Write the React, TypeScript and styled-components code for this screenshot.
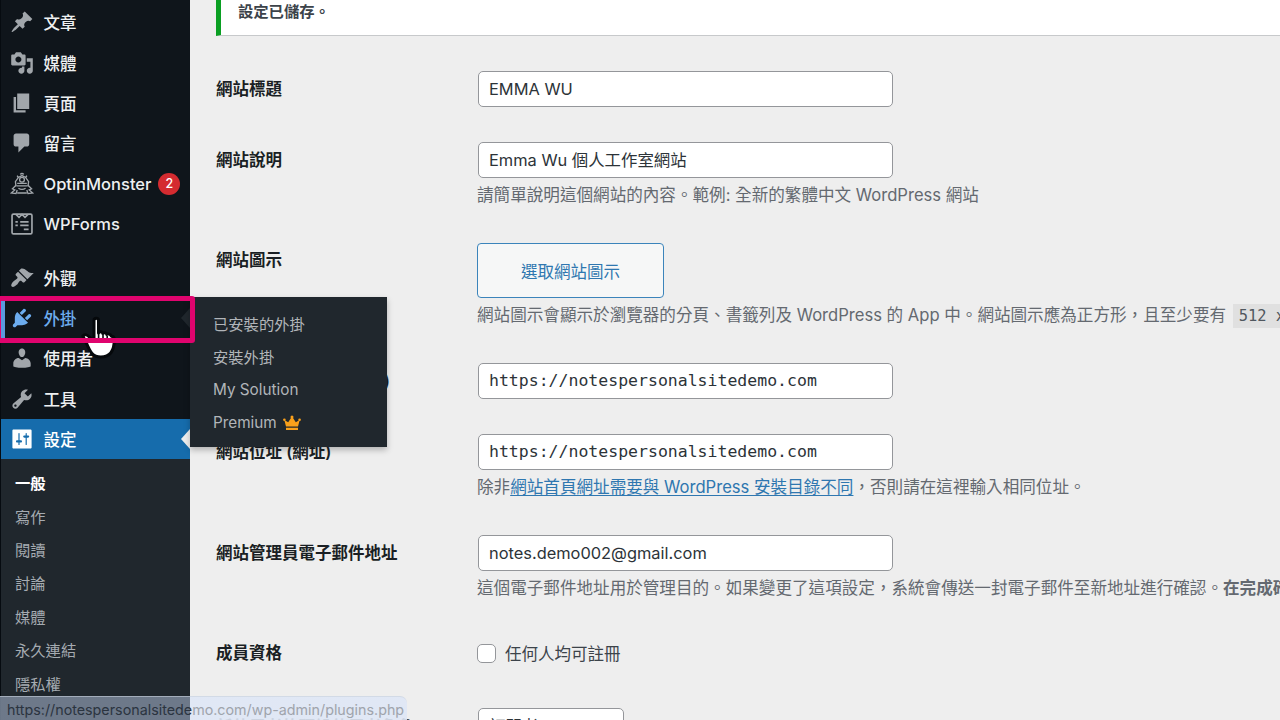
import React from "react";
import styled, { createGlobalStyle, css } from "styled-components";

const sans = `Inter, "Noto Sans CJK TC", sans-serif`;
const mono = `"DejaVu Sans Mono", "Noto Sans CJK TC", monospace`;

const GlobalStyle = createGlobalStyle`
  * { box-sizing: border-box; }
  body { margin: 0; background: #eeeeee; font-family: ${sans}; overflow: hidden; }
`;

const Screen = styled.div`
  position: relative;
  display: flex;
  width: 1280px;
  height: 720px;
  overflow: hidden;
  background: #eeeeee;
`;

const Sidebar = styled.nav`
  flex: none;
  width: 190px;
  height: 720px;
  background: #0f151b;
  border-left: 1px solid #060b10;
  padding-top: 2px;
`;

const MenuItem = styled.div<{ $state?: "current" | "hover" }>`
  position: relative;
  display: flex;
  align-items: center;
  height: 40.4px;
  padding-left: 9px;
  font-size: 16.5px;
  font-weight: 500;
  color: #eef0f1;
  white-space: nowrap;
  svg { color: #a1a6ab; }
  ${(p) =>
    p.$state === "current" &&
    css`
      background: #166cac;
      color: #fff;
      svg { color: #fff; }
    `}
  ${(p) =>
    p.$state === "hover" &&
    css`
      color: #6cacee;
      box-shadow: inset 4px 0 0 #5a9ade;
      svg { color: #6cacee; }
    `}
`;

const MenuIcon = styled.svg`
  flex: none;
  width: 24px;
  height: 24px;
  margin-right: 9.5px;
`;

const Notch = styled.span<{ $color: string }>`
  position: absolute;
  right: 0;
  top: 10px;
  border: 10px solid transparent;
  border-left: 0;
  border-right: 9px solid ${(p) => p.$color};
`;

const Count = styled.span`
  display: flex;
  align-items: center;
  justify-content: center;
  width: 22px;
  height: 22px;
  margin-left: 7px;
  border-radius: 50%;
  background: #d42b30;
  color: #fff;
  font-size: 12.5px;
`;

const Separator = styled.div`
  height: 13px;
`;

const Submenu = styled.div`
  height: 270px;
  padding: 8px 0 0 14px;
  background: #20272d;
`;

const SubmenuItem = styled.div<{ $active?: boolean }>`
  height: 33.4px;
  line-height: 33.4px;
  font-size: 15.3px;
  font-weight: ${(p) => (p.$active ? 700 : 400)};
  color: ${(p) => (p.$active ? "#fff" : "#a5abb1")};
`;

const Main = styled.main`
  flex: none;
  width: 1290px;
  padding-left: 26px;
`;

const Notice = styled.div`
  height: 36px;
  border-left: 5px solid #0a9f22;
  border-bottom: 1px solid #c7c9cb;
  background: #fff;
  padding: 0 0 0 17px;
  font-size: 15.3px;
  font-weight: 600;
  line-height: 24px;
  color: #3c434a;
`;

const Row = styled.section<{ $h: number }>`
  display: grid;
  grid-template-columns: 261px 1000px;
  height: ${(p) => p.$h}px;
`;

const Label = styled.div<{ $top?: number }>`
  padding-top: ${(p) => p.$top ?? 6}px;
  font-size: 16.5px;
  font-weight: 600;
  line-height: 24px;
  color: #1a1f24;
  white-space: nowrap;
`;

const Field = styled.div`
  display: flex;
  flex-direction: column;
  align-items: flex-start;
`;

const TextBox = styled.div<{ $mono?: boolean; $w?: number }>`
  width: ${(p) => p.$w ?? 415}px;
  height: 36px;
  margin-left: 1px;
  padding-left: 10px;
  border: 1.5px solid #94969a;
  border-radius: 5px;
  background: #fff;
  font-family: ${(p) => (p.$mono ? mono : sans)};
  font-size: ${(p) => (p.$mono ? 16.5 : 16.4)}px;
  line-height: 34px;
  color: #2c3338;
  white-space: pre;
`;

const Hint = styled.div`
  height: 24px;
  margin-top: 5px;
  font-size: 16.58px;
  line-height: 24px;
  color: #646970;
  white-space: nowrap;
`;

const Link = styled.a`
  color: #2f77b0;
  text-decoration: underline;
  text-underline-offset: 2px;
`;

const Code = styled.code`
  margin-left: 2px;
  padding: 3px 6px;
  background: #e0e0e0;
  font-family: ${mono};
  font-size: 15.4px;
  color: #50575e;
`;

const PickButton = styled.div`
  display: flex;
  align-items: center;
  justify-content: center;
  width: 187px;
  height: 55px;
  border: 1.5px solid #3b84bb;
  border-radius: 4px;
  background: #f6f7f7;
  color: #2f77b0;
  font-size: 16.5px;
`;

const CheckLine = styled.div`
  display: flex;
  align-items: center;
  gap: 9px;
  height: 36px;
  font-size: 16.5px;
  color: #3c434a;
`;

const CheckBox = styled.span`
  width: 19px;
  height: 19px;
  border: 1.5px solid #94969a;
  border-radius: 5px;
  background: #fff;
`;

const Flyout = styled.div`
  position: absolute;
  left: 190px;
  top: 297px;
  width: 197px;
  height: 150px;
  padding: 9px 0 0 23px;
  background: #20272d;
  box-shadow: 0 3px 6px rgba(0, 0, 0, 0.25);
`;

const FlyoutItem = styled.div`
  display: flex;
  align-items: center;
  height: 33.4px;
  font-size: 15.3px;
  color: #b1b5b9;
  white-space: nowrap;
  svg { width: 18px; height: 16px; margin-left: 6px; }
`;

const Highlight = styled.div`
  position: absolute;
  left: -4px;
  top: 296px;
  width: 199px;
  height: 47px;
  border: 5px solid #e0046e;
  border-radius: 3px;
`;

const Pointer = styled.svg`
  position: absolute;
  left: 80px;
  top: 314px;
  width: 40px;
  height: 48px;
  overflow: visible;
`;

const StatusBar = styled.div`
  position: absolute;
  left: 0;
  top: 696px;
  width: 407px;
  height: 30px;
  padding-left: 7px;
  border-top: 1px solid rgba(200, 208, 220, 0.6);
  border-radius: 0 7px 0 0;
  background: linear-gradient(90deg, rgba(120, 133, 151, 0.88) 190px, rgba(222, 230, 245, 0.9) 190px);
  font-size: 14.3px;
  line-height: 25px;
  color: #9fa4ac;
  white-space: nowrap;
`;

const StatusDark = styled.span`
  color: #2b3440;
`;

const icons: Record<string, React.ReactNode> = {
  post: <path d="M10.44 3.02l1.82-1.82 6.36 6.35-1.83 1.82c-1.05-.68-2.48-.57-3.41.36l-.75.75c-.92.93-1.04 2.35-.35 3.41l-1.83 1.82-2.41-2.41-2.8 2.79c-.42.42-3.38 2.71-3.8 2.29s1.86-3.39 2.28-3.81l2.79-2.79L4.1 9.36l1.83-1.82c1.05.69 2.48.57 3.4-.36l.75-.75c.93-.92 1.05-2.35.36-3.41z" />,
  media: <path d="M13 11V4c0-.55-.45-1-1-1h-1.67L9 1H5L3.67 3H2c-.55 0-1 .45-1 1v7c0 .55.45 1 1 1h10c.55 0 1-.45 1-1zM7 4.5c1.38 0 2.5 1.12 2.5 2.5S8.38 9.5 7 9.5 4.5 8.38 4.5 7 5.62 4.5 7 4.5zM14 6h5v10.5c0 1.38-1.12 2.5-2.5 2.5S14 17.88 14 16.5s1.12-2.5 2.5-2.5c.17 0 .34.02.5.05V9h-3V6zm-4 8.05V13h2v3.5c0 1.38-1.12 2.5-2.5 2.5S7 17.88 7 16.5 8.12 14 9.5 14c.17 0 .34.02.5.05z" />,
  page: <path d="M6 15V2h10v13H6zm-1 1h8v2H3V5h2v11z" />,
  comment: <path d="M5 2h9c1.1 0 2 .9 2 2v7c0 1.1-.9 2-2 2h-2l-5 5v-5H5c-1.1 0-2-.9-2-2V4c0-1.1.9-2 2-2z" />,
  monster: (
    <g fill="none" stroke="currentColor" strokeWidth="1.1">
      <path d="M5 12L4.5 8 7 4.5 10 3l3 1.500L15.500 8 15 12M7 5l-1-2M13 5l1-2" />
      <circle cx="10" cy="6.500" r="2" />
      <path d="M6 9.500h8M5.500 11.500h9M7 13.500q3 2 6 0M8.500 2q1.500-1.500 3 0" />
      <path d="M5 11l-3 3 2 1-3 2.500 4 .5 1-3M15 11l3 3-2 1 3 2.500-4 .5-1-3M6 17.500h8" />
    </g>
  ),
  forms: (
    <g fill="none" stroke="currentColor" strokeWidth="1.400">
      <rect x="1.700" y="1.700" width="16.600" height="16.600" rx="1.200" />
      <path d="M5 2l2.500 2.500L10 2l2.500 2.500L15 2M4.500 8.200h2M8.500 8.200h7M4.500 11.200h2M8.500 11.200h7M11.500 14.500h4" />
    </g>
  ),
  appearance: <path d="M14.48 11.06L7.41 3.99l1.5-1.5c.5-.56 2.3-.47 3.51.32 1.21.8 1.43 1.28 2.91 2.1 1.18.64 2.45 1.26 4.45.85zm-.71.71L6.7 4.7 4.93 6.47c-.39.39-.39 1.02 0 1.41l1.06 1.06c.39.39.39 1.03 0 1.42-.6.6-1.43 1.11-2.21 1.69-.35.26-.7.53-1.01.84C1.43 14.23.4 16.08 1.4 17.07c.99 1 2.84-.03 4.18-1.36.31-.31.58-.66.85-1.02.57-.78 1.08-1.61 1.69-2.21.39-.39 1.02-.39 1.41 0l1.06 1.06c.39.39 1.02.39 1.41 0z" />,
  plugins: <path d="M13.11 4.36L9.87 7.6 8 5.73l3.24-3.24c.35-.34 1.05-.2 1.56.32.52.51.66 1.21.31 1.55zm-8 1.77l.91-1.12 9.01 9.01-1.19.84c-.71.71-2.63 1.16-3.82 1.16H6.14L4.9 17.26c-.59.59-1.54.59-2.12 0-.59-.58-.59-1.53 0-2.12l1.24-1.24v-3.88c0-1.13.4-3.19 1.09-3.89zm7.26 3.97l3.24-3.24c.34-.35 1.04-.21 1.55.31.52.51.66 1.21.31 1.55l-3.24 3.25z" />,
  users: <path d="M10 9.25c-2.27 0-2.73-3.44-2.73-3.44C7 4.02 7.82 2 9.97 2c2.16 0 2.98 2.02 2.71 3.81 0 0-.41 3.44-2.68 3.44zm0 2.57L12.720 10c2.39 0 4.52 2.33 4.52 4.53v2.49s-3.65 1.13-7.24 1.13c-3.65 0-7.24-1.13-7.24-1.13v-2.49c0-2.25 1.94-4.48 4.47-4.48z" />,
  tools: <path d="M16.68 9.77c-1.34 1.34-3.3 1.67-4.95.99l-5.41 6.52c-.99.99-2.59.99-3.58 0s-.99-2.59 0-3.57l6.52-5.42c-.68-1.65-.35-3.61.99-4.95 1.28-1.28 3.12-1.62 4.72-1.06l-2.89 2.89 2.82 2.82 2.86-2.87c.53 1.58.18 3.39-1.08 4.65zM3.81 16.21c.4.39 1.04.39 1.43 0 .4-.4.4-1.04 0-1.43-.39-.4-1.03-.4-1.43 0-.39.39-.39 1.03 0 1.43z" />,
  settings: <path fillRule="evenodd" d="M18 17V3c0-.55-.45-1-1-1H3c-.55 0-1 .45-1 1v14c0 .55.45 1 1 1h14c.55 0 1-.45 1-1zM8 11h1c.55 0 1 .45 1 1s-.45 1-1 1H8v1.500c0 .28-.22.5-.5.5s-.5-.22-.5-.5V13H6c-.55 0-1-.45-1-1s.45-1 1-1h1V5.500c0-.28.22-.5.5-.5s.5.22.5.5V11zm5-2h-1c-.55 0-1-.45-1-1s.45-1 1-1h1V5.500c0-.28.22-.5.5-.5s.5.22.5.5V7h1c.55 0 1 .45 1 1s-.45 1-1 1h-1v5.500c0 .28-.22.5-.5.5s-.5-.22-.5-.5V9z" />,
};

type ItemProps = {
  icon: string;
  label: string;
  state?: "current" | "hover";
  notch?: string;
  count?: number;
};

const Item = ({ icon, label, state, notch, count }: ItemProps) => (
  <MenuItem $state={state}>
    <MenuIcon viewBox="0 0 20 20" fill="currentColor">{icons[icon]}</MenuIcon>
    {label}
    {count && <Count>{count}</Count>}
    {notch && <Notch $color={notch} />}
  </MenuItem>
);

export default function App() {
  return (
    <Screen>
      <GlobalStyle />
      <Sidebar>
        <Item icon="post" label="文章" />
        <Item icon="media" label="媒體" />
        <Item icon="page" label="頁面" />
        <Item icon="comment" label="留言" />
        <Item icon="monster" label="OptinMonster" count={2} />
        <Item icon="forms" label="WPForms" />
        <Separator />
        <Item icon="appearance" label="外觀" />
        <Item icon="plugins" label="外掛" state="hover" notch="#20272d" />
        <Item icon="users" label="使用者" />
        <Item icon="tools" label="工具" />
        <Item icon="settings" label="設定" state="current" notch="#eeeeee" />
        <Submenu>
          {["一般", "寫作", "閱讀", "討論", "媒體", "永久連結", "隱私權"].map((t, i) => (
            <SubmenuItem key={t} $active={i === 0}>{t}</SubmenuItem>
          ))}
        </Submenu>
      </Sidebar>

      <Main>
        <Notice>設定已儲存。</Notice>
        <Row $h={35} />
        <Row $h={71}>
          <Label>網站標題</Label>
          <Field><TextBox>EMMA WU</TextBox></Field>
        </Row>
        <Row $h={101}>
          <Label>網站說明</Label>
          <Field>
            <TextBox>Emma Wu 個人工作室網站</TextBox>
            <Hint>請簡單說明這個網站的內容。範例: 全新的繁體中文 WordPress 網站</Hint>
          </Field>
        </Row>
        <Row $h={120}>
          <Label $top={5}>網站圖示</Label>
          <Field>
            <PickButton>選取網站圖示</PickButton>
            <Hint>
              網站圖示會顯示於瀏覽器的分頁、書籤列及 WordPress 的 App 中。網站圖示應為正方形，且至少要有 <Code>512 x 512</Code>
            </Hint>
          </Field>
        </Row>
        <Row $h={71}>
          <Label>WordPress 位址 (網址)</Label>
          <Field><TextBox $mono>https://notespersonalsitedemo.com</TextBox></Field>
        </Row>
        <Row $h={101}>
          <Label>網站位址 (網址)</Label>
          <Field>
            <TextBox $mono>https://notespersonalsitedemo.com</TextBox>
            <Hint>
              除非<Link>網站首頁網址需要與 WordPress 安裝目錄不同</Link>，否則請在這裡輸入相同位址。
            </Hint>
          </Field>
        </Row>
        <Row $h={100}>
          <Label>網站管理員電子郵件地址</Label>
          <Field>
            <TextBox>notes.demo002@gmail.com</TextBox>
            <Hint>
              這個電子郵件地址用於管理目的。如果變更了這項設定，系統會傳送一封電子郵件至新地址進行確認。<b>在完成確認</b>
            </Hint>
          </Field>
        </Row>
        <Row $h={73}>
          <Label>成員資格</Label>
          <CheckLine><CheckBox />任何人均可註冊</CheckLine>
        </Row>
        <Row $h={60}>
          <Label $top={7}>新使用者的預設使用者角色</Label>
          <Field><TextBox $w={146}>訂閱者</TextBox></Field>
        </Row>
      </Main>

      <Flyout>
        <FlyoutItem>已安裝的外掛</FlyoutItem>
        <FlyoutItem>安裝外掛</FlyoutItem>
        <FlyoutItem>My Solution</FlyoutItem>
        <FlyoutItem>
          Premium
          <svg viewBox="0 0 18 16" fill="#f9a01b">
            <path d="M3 11.500L1.300 5l3.900 2.300L8.300 2.500h1.400l3.100 4.800L16.700 5 15 11.500zM3 12.700h12V15H3z" />
            <circle cx="1.400" cy="4.800" r="1.300" /><circle cx="16.600" cy="4.800" r="1.300" /><circle cx="9" cy="2" r="1.500" />
          </svg>
        </FlyoutItem>
      </Flyout>

      <Pointer viewBox="0 0 40 48">
        <path
          d="M14 6.500c0-3 4.500-3 4.500 0V19c1-2 4-1.600 4.300.6 1-1.500 3.700-1 4 1 1.200-1.300 4-.5 4.500 1.600 2 0 3 1 3 3.300 0 8-2 17.500-13.500 17.500-8.500 0-11-6-14-13-1.500-3-3-6-4-8 2-2.500 5-1 7 1.500l4.200 3z"
          fill="#fff" stroke="#05080b" strokeWidth="3" strokeLinejoin="round"
        />
        <path d="M18.600 19v8M23 21v7M27.200 22v6" stroke="#05080b" strokeWidth="1.600" />
      </Pointer>
      <Highlight />
      <StatusBar><StatusDark>https://notespersonalsitede</StatusDark>mo.com/wp-admin/plugins.php</StatusBar>
    </Screen>
  );
}
